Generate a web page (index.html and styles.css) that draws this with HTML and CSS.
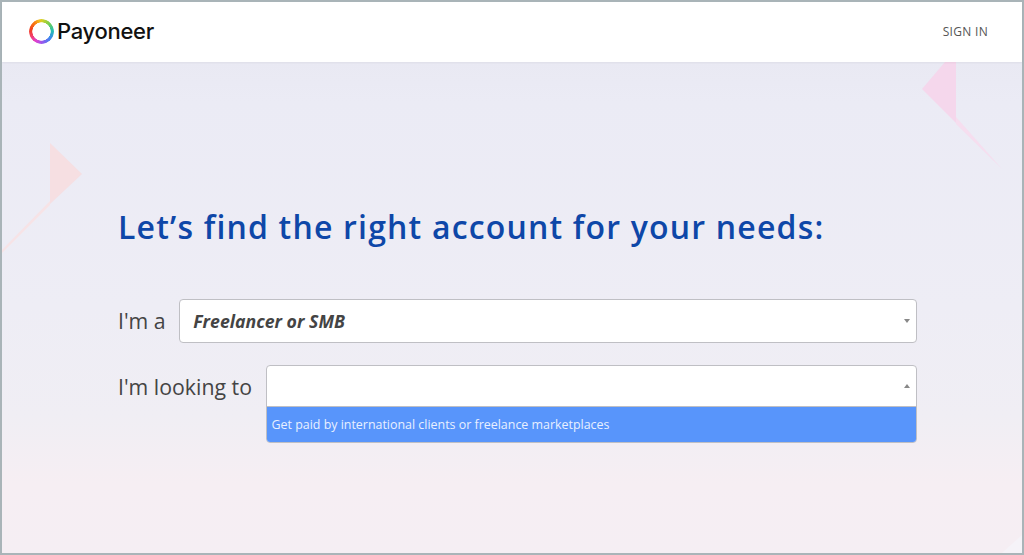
FILE: index.html
```html
<!DOCTYPE html>
<html lang="en">
<head>
<meta charset="utf-8">
<title>Payoneer</title>
<link rel="stylesheet" href="styles.css">
</head>
<body>
<div class="frame">
  <header class="topbar">
    <a class="brand">
      <span class="brand-ring"></span>
      <span class="brand-name">Payoneer</span>
    </a>
    <a class="signin">SIGN IN</a>
  </header>
  <main class="content">
    <svg class="deco deco-right" width="84" height="112" viewBox="0 0 84 112">
      <polygon points="25,0 36,0 36,61 2,27" fill="#f5d7ec"/>
      <polygon points="36,55 82,107 36,62" fill="#f6deef"/>
    </svg>
    <svg class="deco deco-left" width="82" height="114" viewBox="0 0 82 114">
      <polygon points="48,2 80,33 48,63" fill="#f6dfe2"/>
      <polygon points="48,60 48,64 0,112 0,109" fill="#f7e3e6"/>
    </svg>
    <svg class="deco deco-corner" width="20" height="18" viewBox="0 0 20 18">
      <polygon points="0,18 20,0 20,18" fill="#f5f3f8"/>
    </svg>
    <h1 class="title">Let’s find the right account for your needs:</h1>
    <div class="row row-first">
      <span class="label">I'm a</span>
      <div class="select">
        <span class="value">Freelancer or SMB</span>
        <span class="caret caret-down"></span>
      </div>
    </div>
    <div class="row row-second">
      <span class="label">I'm looking to</span>
      <div class="combo">
        <div class="combo-input"><span class="caret caret-up"></span></div>
        <div class="option">Get paid by international clients or freelance marketplaces</div>
      </div>
    </div>
  </main>
</div>
</body>
</html>
```
FILE: styles.css
```css
* { box-sizing: border-box; }
html, body { margin: 0; padding: 0; }
body { width: 1024px; height: 555px; overflow: hidden; font-family: "Open Sans", sans-serif; }
.frame {
  width: 1024px; height: 555px;
  border: 2px solid #a9b4b8;
  display: flex; flex-direction: column;
  background: #fff;
}
.topbar {
  height: 60px; flex: none;
  display: flex; align-items: center; justify-content: space-between;
  padding: 0 34px 2px 27px;
  background: #fff;
  box-shadow: 0 1px 2px rgba(0,0,0,.05);
  position: relative; z-index: 1;
}
.brand { display: flex; align-items: center; gap: 3px; }
.brand-ring {
  display: block; width: 25px; height: 25px; border-radius: 50%;
  background: conic-gradient(from 0deg, #d8cf22 0deg, #7fd04a 40deg, #22bfb0 85deg, #3f86f0 130deg, #8a5cf0 170deg, #e040d0 210deg, #f23f6a 245deg, #f2401f 280deg, #f77a12 320deg, #f5b51e 345deg, #d8cf22 360deg);
  -webkit-mask: radial-gradient(circle, transparent 8.9px, #000 9.4px);
  mask: radial-gradient(circle, transparent 8.9px, #000 9.4px);
}
.brand-name {
  font-family: Inter, sans-serif; font-weight: 500; font-size: 22px;
  letter-spacing: -0.3px; color: #111;
}
.signin { font-size: 12px; letter-spacing: 0.3px; color: #555; }
.content {
  flex: 1; position: relative;
  padding: 0 0 0 116px;
  background: linear-gradient(180deg, #e9e9f3 0%, #ebebf5 8%, #eeedf5 50%, #f0eef4 72%, #f6eef3 86%, #f5eef3 100%);
}
.deco { position: absolute; display: block; }
.deco-right { right: 18px; top: 0; }
.deco-left { left: 0; top: 79px; }
.deco-corner { right: 0; bottom: 0; }
.title {
  margin: 143px 0 0;
  font-size: 32px; line-height: 44px; font-weight: 600;
  letter-spacing: 1.18px; color: #0e47a8; white-space: nowrap;
}
.row { display: flex; align-items: flex-start; position: relative; width: 799px; }
.row-first { margin-top: 50px; }
.row-second { margin-top: 22px; }
.label { font-size: 21.3px; color: #444; white-space: nowrap; line-height: 44px; }
.row-first .label { margin-right: 13px; }
.row-second .label { margin-right: 13.5px; }
.select {
  flex: 1; height: 44px;
  display: flex; align-items: center; justify-content: space-between;
  padding: 0 6px 0 13.5px;
  background: #fff;
  border: 1px solid #bfbfc4; border-radius: 4px;
}
.value { font-size: 17.7px; font-weight: 700; font-style: italic; color: #444; }
.combo {
  flex: 1;
  border: 1px solid #bfbfc4; border-radius: 4px;
  overflow: hidden; background: #fff;
}
.combo-input {
  height: 41px;
  display: flex; align-items: center; justify-content: flex-end;
  padding-right: 6px;
  border-bottom: 1px solid #bfbfc4;
}
.option {
  height: 35px; line-height: 35px;
  padding-left: 5px;
  background: #5895fb; color: #e8f0ff;
  font-size: 12.43px; white-space: nowrap;
}
.caret { width: 0; height: 0; border-left: 3.5px solid transparent; border-right: 3.5px solid transparent; }
.caret-down { border-top: 4px solid #888; }
.caret-up { border-bottom: 4px solid #888; }
```
